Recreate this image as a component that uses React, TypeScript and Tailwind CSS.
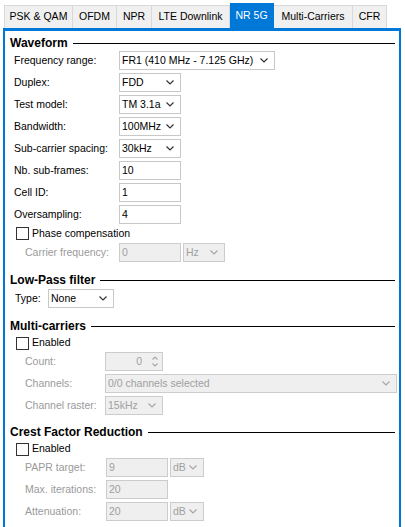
import React from 'react';

const tabs: [string, string][] = [
  ['PSK & QAM', 'w-[69px]'],
  ['OFDM', 'w-[44px]'],
  ['NPR', 'w-[35px]'],
  ['LTE Downlink', 'w-[78px]'],
  ['NR 5G', 'w-[44px]'],
  ['Multi-Carriers', 'w-[79px]'],
  ['CFR', 'w-[34px]'],
];

function Chevron({ disabled }: { disabled?: boolean }) {
  return (
    <svg width="8" height="5" viewBox="0 0 8 5" className="shrink-0">
      <polyline
        points="0.5,0.5 4,4 7.5,0.5"
        fill="none"
        stroke={disabled ? '#a6a6a6' : '#333333'}
        strokeWidth="1.2"
      />
    </svg>
  );
}

function Combo({ value, w, disabled }: { value: string; w: string; disabled?: boolean }) {
  return (
    <div
      className={`${w} h-[19px] flex items-center justify-between pl-[2px] pr-[6px] border ${
        disabled ? 'bg-[#efefef] border-[#cccccc] text-[#a0a0a0]' : 'bg-white border-[#c8c8c8] text-black'
      }`}
    >
      <span className="whitespace-nowrap">{value}</span>
      <Chevron disabled={disabled} />
    </div>
  );
}

function Field({ value, w, disabled }: { value: string; w: string; disabled?: boolean }) {
  return (
    <div
      className={`${w} h-[19px] flex items-center pl-[2px] border ${
        disabled ? 'bg-[#efefef] border-[#cccccc] text-[#a0a0a0]' : 'bg-white border-[#c8c8c8] text-black'
      }`}
    >
      {value}
    </div>
  );
}

function Header({ title, mt }: { title: string; mt: string }) {
  return (
    <div className={`${mt} h-[16px] flex items-center pl-[5px] pr-[4px]`}>
      <span className="font-bold text-[12px] whitespace-nowrap">{title}</span>
      <div className="flex-1 h-px bg-black ml-[5px]" />
    </div>
  );
}

function Check({ label, h }: { label: string; h: string }) {
  return (
    <div className={`${h} flex items-center pl-[11px]`}>
      <div className="w-[13px] h-[13px] border border-[#333333] bg-white" />
      <span className="ml-[3px]">{label}</span>
    </div>
  );
}

function Row({ label, children, mt, pl, lw, disabled }: { label: string; children: React.ReactNode; mt: string; pl: string; lw: string; disabled?: boolean }) {
  return (
    <div className={`${mt} flex items-center ${pl}`}>
      <span className={`${lw} whitespace-nowrap ${disabled ? 'text-[#9a9a9a]' : 'text-black'}`}>{label}</span>
      {children}
    </div>
  );
}

export default function App() {
  return (
    <div
      className="w-[405px] h-[527px] bg-white overflow-hidden text-[10.5px] text-black"
      style={{ fontFamily: "'Liberation Sans', Arial, sans-serif" }}
    >
      {/* Tab bar */}
      <div className="flex items-end h-[28px] pt-[3px] pl-[4px]">
        {tabs.map(([t, w]) => {
          const active = t === 'NR 5G';
          return (
            <div
              key={t}
              className={`${w} flex items-center justify-center border-t border-r ${
                t === 'PSK & QAM' ? 'border-l' : ''
              } ${
                active
                  ? 'h-[25px] bg-[#0078d7] border-[#0078d7] text-white'
                  : 'h-[23px] bg-[#f0f0f0] border-[#d9d9d9] text-black'
              }`}
            >
              <span className="whitespace-nowrap">{t}</span>
            </div>
          );
        })}
      </div>

      {/* Panel */}
      <div className="ml-[3px] w-[398px] h-[499px] border-x-2 border-t-[3px] border-[#0078d7] bg-white flex flex-col">
        <Header title="Waveform" mt="mt-[4px]" />
        <div className="flex flex-col">
          <Row label="Frequency range:" mt="mt-0" pl="pl-[9px]" lw="w-[105px]">
            <Combo value="FR1 (410 MHz - 7.125 GHz)" w="w-[156px]" />
          </Row>
          <Row label="Duplex:" mt="mt-[3px]" pl="pl-[9px]" lw="w-[105px]">
            <Combo value="FDD" w="w-[62px]" />
          </Row>
          <Row label="Test model:" mt="mt-[3px]" pl="pl-[9px]" lw="w-[105px]">
            <Combo value="TM 3.1a" w="w-[62px]" />
          </Row>
          <Row label="Bandwidth:" mt="mt-[3px]" pl="pl-[9px]" lw="w-[105px]">
            <Combo value="100MHz" w="w-[62px]" />
          </Row>
          <Row label="Sub-carrier spacing:" mt="mt-[3px]" pl="pl-[9px]" lw="w-[105px]">
            <Combo value="30kHz" w="w-[62px]" />
          </Row>
          <Row label="Nb. sub-frames:" mt="mt-[3px]" pl="pl-[9px]" lw="w-[105px]">
            <Field value="10" w="w-[62px]" />
          </Row>
          <Row label="Cell ID:" mt="mt-[3px]" pl="pl-[9px]" lw="w-[105px]">
            <Field value="1" w="w-[62px]" />
          </Row>
          <Row label="Oversampling:" mt="mt-[3px]" pl="pl-[9px]" lw="w-[105px]">
            <Field value="4" w="w-[62px]" />
          </Row>
          <Check label="Phase compensation" h="h-[19px]" />
          <Row label="Carrier frequency:" mt="mt-0" pl="pl-[20px]" lw="w-[94px]" disabled>
            <Field value="0" w="w-[62px]" disabled />
            <div className="ml-[2px]">
              <Combo value="Hz" w="w-[42px]" disabled />
            </div>
          </Row>
        </div>

        <Header title="Low-Pass filter" mt="mt-[10px]" />
        <Row label="Type:" mt="mt-px" pl="pl-[10px]" lw="w-[33px]">
          <Combo value="None" w="w-[66px]" />
        </Row>

        <Header title="Multi-carriers" mt="mt-[10px]" />
        <Check label="Enabled" h="h-[18px]" />
        <Row label="Count:" mt="mt-0" pl="pl-[20px]" lw="w-[80px]" disabled>
          <div className="w-[58px] h-[19px] flex items-center justify-end pr-[4px] border bg-[#efefef] border-[#cccccc] text-[#a0a0a0]">
            <span>0</span>
            <svg width="6" height="11" viewBox="0 0 6 11" className="ml-[10px]">
              <polyline points="0.5,3.5 3,1 5.5,3.5" fill="none" stroke="#a6a6a6" strokeWidth="1.1" />
              <polyline points="0.5,7.5 3,10 5.5,7.5" fill="none" stroke="#a6a6a6" strokeWidth="1.1" />
            </svg>
          </div>
        </Row>
        <Row label="Channels:" mt="mt-[3px]" pl="pl-[20px]" lw="w-[80px]" disabled>
          <Combo value="0/0 channels selected" w="w-[292px]" disabled />
        </Row>
        <Row label="Channel raster:" mt="mt-[3px]" pl="pl-[20px]" lw="w-[80px]" disabled>
          <Combo value="15kHz" w="w-[58px]" disabled />
        </Row>

        <Header title="Crest Factor Reduction" mt="mt-[9px]" />
        <Check label="Enabled" h="h-[18px]" />
        <Row label="PAPR target:" mt="mt-0" pl="pl-[20px]" lw="w-[81px]" disabled>
          <Field value="9" w="w-[62px]" disabled />
          <div className="ml-[2px]">
            <Combo value="dB" w="w-[34px]" disabled />
          </div>
        </Row>
        <Row label="Max. iterations:" mt="mt-[3px]" pl="pl-[20px]" lw="w-[81px]" disabled>
          <Field value="20" w="w-[62px]" disabled />
        </Row>
        <Row label="Attenuation:" mt="mt-[3px]" pl="pl-[20px]" lw="w-[81px]" disabled>
          <Field value="20" w="w-[62px]" disabled />
          <div className="ml-[2px]">
            <Combo value="dB" w="w-[34px]" disabled />
          </div>
        </Row>
      </div>
    </div>
  );
}
